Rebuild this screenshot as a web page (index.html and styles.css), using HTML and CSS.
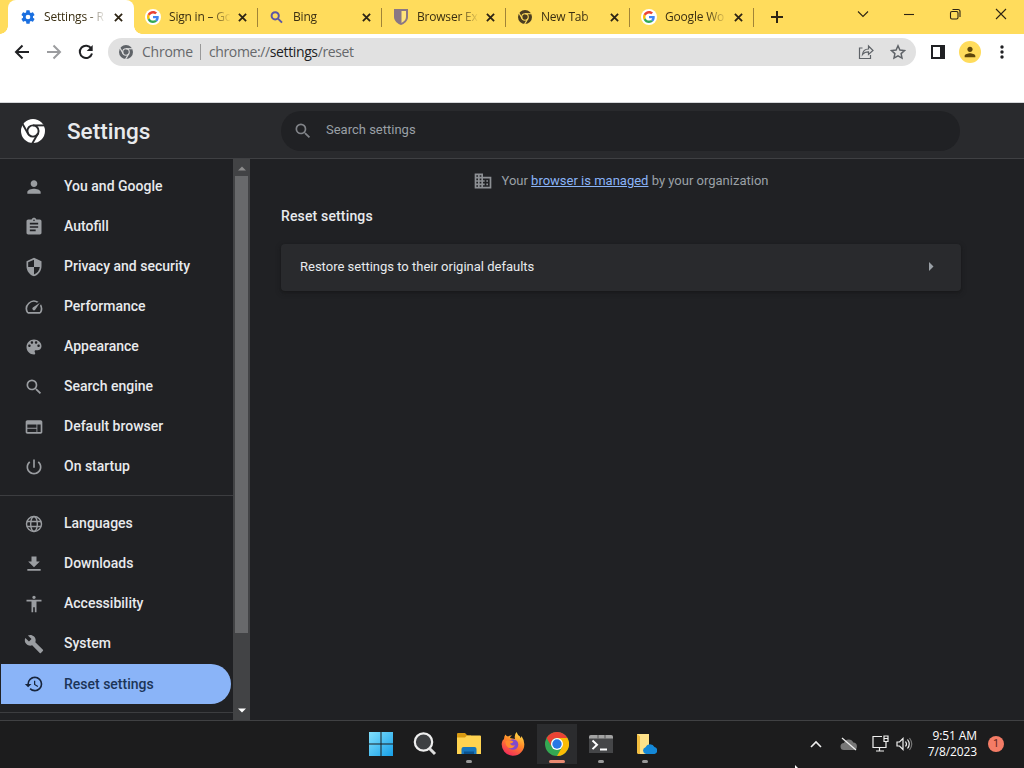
FILE: index.html
```
<!DOCTYPE html>
<html lang="en">
<head>
<meta charset="utf-8">
<title>Settings - Reset settings</title>
<link rel="stylesheet" href="styles.css">
</head>
<body>
<svg class="defs" aria-hidden="true">
  <symbol id="x" viewBox="0 0 10 10"><path d="M1 1l8 8M9 1L1 9" stroke="currentColor" stroke-width="2"/></symbol>
  <symbol id="g" viewBox="0 0 48 48"><path fill="#EA4335" d="M24 9.5c3.54 0 6.71 1.22 9.21 3.6l6.85-6.85C35.9 2.38 30.47 0 24 0 14.62 0 6.51 5.38 2.56 13.22l7.98 6.19C12.43 13.72 17.74 9.5 24 9.5z"/><path fill="#4285F4" d="M46.98 24.55c0-1.57-.15-3.09-.38-4.55H24v9.02h12.94c-.58 2.96-2.26 5.48-4.78 7.18l7.73 6c4.51-4.18 7.09-10.36 7.09-17.65z"/><path fill="#FBBC05" d="M10.53 28.59c-.48-1.45-.76-2.99-.76-4.59s.27-3.14.76-4.59l-7.98-6.19C.92 16.46 0 20.12 0 24s.92 7.54 2.56 10.78l7.97-6.19z"/><path fill="#34A853" d="M24 48c6.48 0 11.93-2.13 15.89-5.81l-7.73-6c-2.15 1.45-4.92 2.3-8.16 2.3-6.26 0-11.57-4.22-13.47-9.91l-7.98 6.19C6.51 42.62 14.62 48 24 48z"/></symbol>
  <symbol id="search" viewBox="0 0 24 24"><path fill="currentColor" d="M15.5 14h-.79l-.28-.27A6.471 6.471 0 0 0 16 9.5 6.5 6.5 0 1 0 9.5 16c1.61 0 3.09-.59 4.23-1.57l.27.28v.79l5 4.99L20.49 19l-4.99-5zm-6 0C7.01 14 5 11.99 5 9.5S7.01 5 9.5 5 14 7.01 14 9.5 11.99 14 9.5 14z"/></symbol>
  <symbol id="chrome" viewBox="0 0 24 24"><circle cx="12" cy="12" r="12" fill="currentColor"/><g fill="none" stroke="var(--gap)" stroke-width="1.9"><circle cx="12" cy="12" r="5.6"/><path d="M12 6.4h11.5"/><path d="M12 6.4h11.5" transform="rotate(120 12 12)"/><path d="M12 6.4h11.5" transform="rotate(240 12 12)"/></g></symbol>
  <symbol id="person" viewBox="0 0 24 24"><path fill="currentColor" d="M12 12c2.21 0 4-1.79 4-4s-1.79-4-4-4-4 1.79-4 4 1.79 4 4 4zm0 2c-2.67 0-8 1.34-8 4v2h16v-2c0-2.66-5.33-4-8-4z"/></symbol>
</svg>

<div class="tabs">
  <div class="tab active"><svg class="fav" viewBox="0 0 24 24"><path fill="#1a6fe0" fill-rule="evenodd" d="M19.43 12.98c.04-.32.07-.64.07-.98s-.03-.66-.07-.98l2.11-1.65c.19-.15.24-.42.12-.64l-2-3.46c-.12-.22-.39-.3-.61-.22l-2.49 1c-.52-.4-1.08-.73-1.69-.98l-.38-2.65A.488.488 0 0 0 14 2h-4c-.25 0-.46.18-.49.42l-.38 2.65c-.61.25-1.17.59-1.69.98l-2.49-1c-.23-.09-.49 0-.61.22l-2 3.46c-.13.22-.07.49.12.64l2.11 1.65c-.04.32-.07.65-.07.98s.03.66.07.98l-2.11 1.65c-.19.15-.24.42-.12.64l2 3.46c.12.22.39.3.61.22l2.49-1c.52.4 1.08.73 1.69.98l.38 2.65c.03.24.24.42.49.42h4c.25 0 .46-.18.49-.42l.38-2.65c.61-.25 1.17-.59 1.69-.98l2.49 1c.23.09.49 0 .61-.22l2-3.46c.12-.22.07-.49-.12-.64l-2.11-1.65zM12 15.5a3.5 3.5 0 1 1 0-7 3.5 3.5 0 0 1 0 7z"/></svg><span class="title">Settings - R</span><svg class="close"><use href="#x"/></svg></div>
  <div class="tab"><span class="fav disc"><svg><use href="#g"/></svg></span><span class="title">Sign in – Go</span><svg class="close"><use href="#x"/></svg></div>
  <div class="tab"><svg class="fav" viewBox="0 0 16 16" fill="none" stroke="#5b55a5" stroke-width="2"><circle cx="6.2" cy="6.8" r="3.6"/><path d="M9 9.6l4 4"/></svg><span class="title">Bing</span><svg class="close"><use href="#x"/></svg></div>
  <div class="tab"><svg class="fav" viewBox="0 0 16 16"><path d="M1 0h14v8c0 4-4 7-7 8C5 15 1 12 1 8z" fill="#8a7784"/><path d="M8.500 2h4.500V8c0 3-2 4.500-4.500 6z" fill="#ffe47a"/></svg><span class="title">Browser Ex</span><svg class="close"><use href="#x"/></svg></div>
  <div class="tab"><svg class="fav brown"><use href="#chrome" x="1" y="1" width="14" height="14"/></svg><span class="title">New Tab</span><svg class="close"><use href="#x"/></svg></div>
  <div class="tab"><span class="fav disc"><svg><use href="#g"/></svg></span><span class="title">Google Wo</span><svg class="close"><use href="#x"/></svg></div>
  <svg class="plus" viewBox="0 0 12 12"><path d="M6 0v12M0 6h12" stroke="#2d2414" stroke-width="2"/></svg>
  <div class="wincontrols">
    <svg viewBox="0 0 12 12"><path d="M1 3.500l5 5 5-5"/></svg>
    <svg viewBox="0 0 12 12"><path d="M1 6.500h10"/></svg>
    <svg viewBox="0 0 12 12"><rect x="1.500" y="3.500" width="7.500" height="7.500" rx="1.500"/><path d="M3.500 1.500H9A2 2 0 0 1 11 3.500V9"/></svg>
    <svg viewBox="0 0 12 12"><path d="M1 1l10 10M11 1L1 11"/></svg>
  </div>
</div>

<div class="toolbar">
  <div class="nav">
    <svg viewBox="0 0 16 16"><path d="M15 8H2M8.500 1.500L2 8l6.500 6.500"/></svg>
    <svg class="off" viewBox="0 0 16 16"><path d="M1 8h13M7.500 1.500L14 8l-6.500 6.500"/></svg>
    <svg viewBox="0 0 16 16"><path d="M13.300 4.600A6.200 6.200 0 1 0 14 9.500"/><path d="M14.700 1v6H8.700z" fill="#202124" stroke="none"/></svg>
  </div>
  <div class="omnibox">
    <svg class="site"><use href="#chrome"/></svg><span class="origin">Chrome</span><span class="bar"></span><span class="url">chrome://<b>settings</b>/reset</span>
    <svg class="share" viewBox="0 0 16 16"><path d="M4.500 4H1.500v10.500h11V11M4.500 10.500C5 6.500 7.500 5 10.500 5V2l4.500 4.500-4.500 4V7.800C8 7.800 6 8.500 4.500 10.500z"/></svg>
    <svg class="star" viewBox="0 0 16 16"><path d="M8 1.800l1.900 4.200 4.600.5-3.400 3.100.9 4.500L8 11.800l-4 2.300.9-4.500L1.500 6.500l4.600-.5z"/></svg>
  </div>
  <svg class="panel" viewBox="0 0 14 14"><path d="M0 0h14v14H0zM2 2v10h7V2z" fill="#202124" fill-rule="evenodd"/></svg>
  <span class="avatar"><svg><use href="#person"/></svg></span>
  <svg class="dots" viewBox="0 0 4 14"><circle cx="2" cy="2" r="1.700"/><circle cx="2" cy="7" r="1.700"/><circle cx="2" cy="12" r="1.700"/></svg>
</div>

<header class="header">
  <svg class="logo"><use href="#chrome"/></svg>
  <h1>Settings</h1>
  <div class="searchbox"><svg><use href="#search"/></svg><span>Search settings</span></div>
</header>

<div class="content">
  <nav class="menu">
    <a class="item"><svg><use href="#person"/></svg>You and Google</a>
    <a class="item"><svg viewBox="0 0 24 24"><path d="M19 3h-4.180C14.400 1.840 13.300 1 12 1c-1.300 0-2.400.84-2.820 2H5c-1.100 0-2 .9-2 2v14c0 1.100.9 2 2 2h14c1.100 0 2-.9 2-2V5c0-1.100-.9-2-2-2zm-7 0c.55 0 1 .45 1 1s-.45 1-1 1-1-.45-1-1 .45-1 1-1zm2 14H7v-2h7v2zm3-4H7v-2h10v2zm0-4H7V7h10v2z"/></svg>Autofill</a>
    <a class="item"><svg viewBox="0 0 24 24"><path d="M12 1L3 5v6c0 5.550 3.840 10.740 9 12 5.160-1.260 9-6.450 9-12V5l-9-4zm0 10.990h7c-.53 4.120-3.280 7.790-7 8.940V12H5V6.300l7-3.110v8.800z"/></svg>Privacy and security</a>
    <a class="item"><svg viewBox="0 0 24 24"><path d="M20.380 8.570l-1.230 1.850a8 8 0 0 1-.22 7.580H5.070A8 8 0 0 1 15.580 6.850l1.850-1.230A10 10 0 0 0 3.350 19a2 2 0 0 0 1.720 1h13.850a2 2 0 0 0 1.740-1 10 10 0 0 0-.27-10.440z"/><path d="M10.590 15.410a2 2 0 0 0 2.830 0l5.660-8.490-8.490 5.660a2 2 0 0 0 0 2.830z"/></svg>Performance</a>
    <a class="item"><svg viewBox="0 0 24 24"><path d="M12 3c-4.970 0-9 4.030-9 9s4.030 9 9 9c.83 0 1.500-.67 1.500-1.500 0-.39-.15-.74-.39-1.010-.23-.26-.38-.61-.38-.99 0-.83.67-1.500 1.500-1.500H16c2.760 0 5-2.240 5-5 0-4.420-4.030-8-9-8zm-5.500 9c-.83 0-1.500-.67-1.500-1.500S5.670 9 6.500 9 8 9.670 8 10.500 7.330 12 6.500 12zm3-4C8.670 8 8 7.330 8 6.500S8.670 5 9.500 5s1.500.67 1.500 1.500S10.330 8 9.500 8zm5 0c-.83 0-1.500-.67-1.500-1.500S13.670 5 14.500 5s1.500.67 1.500 1.500S15.330 8 14.500 8zm3 4c-.83 0-1.500-.67-1.500-1.500S16.670 9 17.500 9s1.500.67 1.500 1.500-.67 1.500-1.500 1.500z"/></svg>Appearance</a>
    <a class="item"><svg><use href="#search"/></svg>Search engine</a>
    <a class="item"><svg viewBox="0 0 24 24"><path d="M20 4H4c-1.100 0-1.990.9-1.990 2L2 18c0 1.100.9 2 2 2h16c1.100 0 2-.9 2-2V6c0-1.100-.9-2-2-2zm-5 14H4v-4h11v4zm0-5H4V9h11v4zm5 5h-4V9h4v9z"/></svg>Default browser</a>
    <a class="item"><svg viewBox="0 0 24 24"><path d="M13 3h-2v10h2V3zm4.830 2.170l-1.420 1.420C17.990 7.860 19 9.810 19 12c0 3.870-3.130 7-7 7s-7-3.130-7-7c0-2.190 1.010-4.140 2.580-5.420L6.170 5.170C4.230 6.820 3 9.260 3 12c0 4.970 4.030 9 9 9s9-4.030 9-9c0-2.740-1.230-5.180-3.170-6.830z"/></svg>On startup</a>
    <div class="rule"></div>
    <a class="item"><svg class="line" viewBox="0 0 24 24"><circle cx="12" cy="12" r="9"/><ellipse cx="12" cy="12" rx="4" ry="9"/><path d="M3.500 9h17M3.500 15h17"/></svg>Languages</a>
    <a class="item"><svg viewBox="0 0 24 24"><path d="M19 9h-4V3H9v6H5l7 7 7-7zM4 18v2h16v-2z"/></svg>Downloads</a>
    <a class="item"><svg viewBox="0 0 24 24"><path d="M12 2c1.100 0 2 .9 2 2s-.9 2-2 2-2-.9-2-2 .9-2 2-2zm9 7h-6v13h-2v-6h-2v6H9V9H3V7h18v2z"/></svg>Accessibility</a>
    <a class="item"><svg viewBox="0 0 24 24"><path d="M22.700 19l-9.100-9.100c.9-2.300.4-5-1.500-6.900-2-2-5-2.400-7.400-1.300L9 6 6 9 1.600 4.700C.4 7.100.9 10.100 2.900 12.100c1.900 1.900 4.600 2.400 6.900 1.500l9.100 9.100c.4.4 1 .4 1.400 0l2.300-2.300c.5-.4.5-1.100.1-1.400z"/></svg>System</a>
    <a class="item selected"><svg viewBox="0 0 24 24"><path d="M13 3a9 9 0 0 0-9 9H1l3.890 3.890.07.14L9 12H6c0-3.870 3.130-7 7-7s7 3.130 7 7-3.130 7-7 7c-1.930 0-3.680-.79-4.940-2.060l-1.420 1.420A8.954 8.954 0 0 0 13 21a9 9 0 0 0 0-18zm-1 5v5l4.280 2.540.72-1.210-3.500-2.080V8H12z"/></svg>Reset settings</a>
    <div class="rule"></div>
  </nav>
  <div class="scrollbar">
    <svg class="up" viewBox="0 0 8 5"><path d="M0 4.500L4 .5l4 4z"/></svg>
    <div class="thumb"></div>
    <svg class="down" viewBox="0 0 8 5"><path d="M0 .5l4 4 4-4z"/></svg>
  </div>
  <main class="main">
    <p class="managed"><svg viewBox="0 0 24 24"><path d="M12 7V3H2v18h20V7H12zM6 19H4v-2h2v2zm0-4H4v-2h2v2zm0-4H4V9h2v2zm0-4H4V5h2v2zm4 12H8v-2h2v2zm0-4H8v-2h2v2zm0-4H8V9h2v2zm0-4H8V5h2v2zm10 12h-8v-2h2v-2h-2v-2h2v-2h-2V9h8v10zm-2-8h-2v2h2v-2zm0 4h-2v2h2v-2z"/></svg><span>Your <a>browser is managed</a> by your organization</span></p>
    <h2>Reset settings</h2>
    <div class="card"><span>Restore settings to their original defaults</span><svg viewBox="0 0 5 9"><path d="M0 0l4.500 4.500L0 9z"/></svg></div>
  </main>
</div>

<footer class="taskbar">
  <div class="apps">
    <div class="app"><svg viewBox="0 0 24 24"><defs><linearGradient id="win" x2="1" y2="1" gradientUnits="objectBoundingBox"><stop stop-color="#82e0fc"/><stop offset="1" stop-color="#169fe8"/></linearGradient></defs><path fill="url(#win)" d="M0 0h11.500v11.500H0zM12.500 0H24v11.500H12.500zM0 12.500h11.500V24H0zM12.500 12.500H24V24H12.500z"/></svg></div>
    <div class="app"><svg viewBox="0 0 24 24"><circle cx="10.500" cy="10" r="8.700" fill="#3d3f42" stroke="#eee" stroke-width="2.200"/><path d="M16.500 16.500l5.500 5.500" stroke="#ddd" stroke-width="3"/></svg></div>
    <div class="app run"><svg viewBox="0 0 24 24"><path d="M0 2q0-1 1-1h7l2.500 2.500H14V10H0z" fill="#d99a12"/><path d="M0 5.500h8l2-2h13q1 0 1 1V22H0z" fill="#ffd350"/><path d="M4.500 22v-5q0-2 2-2h11q2 0 2 2v5z" fill="#1877bd"/><path d="M7 19.500h10V22H7z" fill="#0b528e"/></svg></div>
    <div class="app"><svg viewBox="0 0 24 24"><defs><linearGradient id="fox" x1=".8" y1="0" x2=".3" y2="1"><stop stop-color="#ffe34a"/><stop offset=".45" stop-color="#ff8a28"/><stop offset="1" stop-color="#f3275c"/></linearGradient></defs><path fill="url(#fox)" d="M3 7q0-3 1.500-4.500Q5 4 7 4.500q2-1.500 4-1-2 1-2 2.500l5 1q-1-4 1.500-7 1 3 3.500 4.500 0 1 .5 1.500 1-1 1-2Q23 7.500 23.300 12A11.300 11.300 0 1 1 .8 11Q1 8.500 3 7z"/><circle cx="12" cy="12.500" r="5.300" fill="#8149cc"/><path d="M4.500 9q4-1.500 8 .5-1 2-3.500 2 1 3 5 1.500-2.500 5-7 2.500-3-2-2.500-6.500z" fill="#ff8b2d"/></svg></div>
    <div class="app current"><svg viewBox="0 0 24 24"><circle cx="12" cy="12" r="12" fill="#34a853"/><path d="M12 6h10.400A12 12 0 0 1 12 24l5.200-9z" fill="#fbbc05"/><path d="M1.600 6A12 12 0 0 1 22.400 6H12a6 6 0 0 0-5.200 9z" fill="#ea4335"/><circle cx="12" cy="12" r="6" fill="#fff"/><circle cx="12" cy="12" r="4.700" fill="#2878e4"/></svg></div>
    <div class="app run"><svg viewBox="0 0 24 24"><path d="M0 5q0-2 2-2h20q2 0 2 2v16H0z" fill="#454648"/><path d="M0 5q0-2 2-2h20q2 0 2 2v1.500H0z" fill="#a3a3a3"/><path d="M9 3v3.500M16 3v3.500" stroke="#555"/><path d="M3.500 8.500l4.500 4.300-4.500 4.300M11 17.500h7" fill="none" stroke="#fff" stroke-width="2"/></svg></div>
    <div class="app run"><svg viewBox="0 0 24 24"><path d="M4 2h12v20H6q-2 0-2-2z" fill="#ffe28a"/><path d="M4 2l3 2.500V22q-3 0-3-2z" fill="#f2bd3f"/><path d="M13 22a3.500 3.500 0 0 1-.5-6.800 5 5 0 0 1 9-.2A3.600 3.600 0 0 1 21.500 22z" fill="#1488d8"/></svg></div>
  </div>
  <div class="tray">
    <svg class="chev" viewBox="0 0 12 8"><path d="M1 7l5-5 5 5" stroke-width="1.600"/></svg>
    <svg class="cloud" viewBox="0 0 18 14"><path d="M4 13a3.500 3.500 0 0 1 0-7 5 5 0 0 1 9.300-.5A3.800 3.800 0 0 1 14 13z" fill="#777" stroke="none"/><path d="M2 1l14 12" stroke-width="1.300"/></svg>
    <svg class="net" viewBox="0 0 17 17"><path d="M10 1.500H1v11h13V8M7.500 12.500V16M4 16h8M14 7v4M12 1h4v5.500h-4zM12 3.500h4"/></svg>
    <svg class="vol" viewBox="0 0 17 14"><path d="M1 5v4h2.500L7 12.500v-11L3.500 5zM9.500 4.500q2 2.500 0 5M11.500 2.500q3.500 4.500 0 9"/><path d="M13.500 1q4.500 6 0 12" stroke="#777"/></svg>
  </div>
  <div class="clock">9:51 AM<br>7/8/2023</div>
  <span class="badge">1</span>
  <svg class="cursor" viewBox="0 0 3 3"><path d="M0 0l3 3H0z"/></svg>
</footer>
</body>
</html>
```
FILE: styles.css
```
* { box-sizing: border-box; }
body { margin: 0; width: 1024px; height: 768px; overflow: hidden; display: flex; flex-direction: column; background: #202124; color: #e8eaed; font: 13px/20px Roboto, sans-serif; }
svg { display: block; flex: none; }
.defs { display: none; }
h1, h2, p { margin: 0; }

.tabs { height: 34px; flex: none; display: flex; align-items: center; background: #ffdc5c; padding-left: 8px; position: relative; color: #3b2f12; }
.tab { width: 124px; height: 34px; flex: none; display: flex; align-items: center; padding-left: 11px; position: relative; font: 12px/16px "Open Sans", "Noto Sans", sans-serif; letter-spacing: -.2px; }
.tab::after { content: ""; position: absolute; right: 0; top: 8px; width: 1px; height: 19px; background: #a18437; }
.tab.active { width: 126px; background: #fff; border-radius: 8px 8px 0 0; padding-left: 12px; }
.tab.active::before { content: ""; position: absolute; left: -8px; bottom: 0; width: 8px; height: 8px; background: radial-gradient(circle at 0 0, transparent 7.500px, #fff 8px); }
.tab.active::after { background: radial-gradient(circle at 100% 0, transparent 7.500px, #fff 8px); right: -8px; top: 26px; width: 8px; height: 8px; }
.fav { width: 16px; height: 16px; flex: none; margin-right: 8px; }
.disc { border-radius: 50%; background: #fff; padding: 2px; }
.disc svg { width: 12px; height: 12px; }
.brown { color: #4a3d20; --gap: #ffdc5c; }
.title { width: 61px; overflow: hidden; white-space: nowrap; -webkit-mask-image: linear-gradient(90deg, #000 42px, transparent 62px); mask-image: linear-gradient(90deg, #000 42px, transparent 62px); }
.close { width: 9px; height: 9px; margin-left: 8px; color: #2d2414; }
.active .close { margin-left: 9px; }
.plus { width: 12px; height: 12px; margin-left: 17px; }
.wincontrols { margin: -6px 17px 0 auto; display: flex; gap: 34px; }
.wincontrols svg { width: 12px; height: 12px; fill: none; stroke: #2d2414; stroke-width: 1.100; }

.toolbar { height: 69px; flex: none; background: #fff; border-bottom: 1px solid #d5d7da; display: flex; align-items: flex-start; padding: 4px 20px 0 14px; }
.nav { display: flex; gap: 16px; padding-top: 6px; width: 94px; }
.nav svg { width: 16px; height: 16px; fill: none; stroke: #202124; stroke-width: 2; }
.nav .off { stroke: #9b9c9f; }
.omnibox { width: 808px; height: 28px; border-radius: 14px; background: #e1e1e1; display: flex; align-items: center; padding: 0 10px 0 11px; font: 14px/20px "Open Sans", "Noto Sans", sans-serif; letter-spacing: -.380px; color: #66686b; }
.site { width: 14px; height: 14px; color: #5f6368; --gap: #e1e1e1; }
.origin { margin-left: 9px; width: 49px; letter-spacing: -.250px; }
.bar { width: 1px; height: 16px; background: #999; margin: 0 8px 0 9px; }
.url b { font-weight: 400; color: #202124; }
.share, .star { width: 16px; height: 16px; fill: none; stroke: #5f6368; }
.share { margin-left: auto; margin-right: 16px; stroke-width: 1.200; }
.star { stroke-width: 1.500; }
.panel { width: 14px; height: 14px; margin: 7px 0 0 15px; }
.avatar { width: 22px; height: 22px; border-radius: 50%; background: #ffdc5c; margin: 3px 0 0 14px; padding: 3px; color: #5e460b; }
.avatar svg { width: 16px; height: 16px; }
.dots { width: 4px; height: 14px; margin: 7px 0 0 19px; fill: #202124; }

.header { height: 56px; flex: none; background: #292a2d; border-bottom: 1px solid #3f4043; display: flex; align-items: center; padding-left: 21px; }
.logo { width: 24px; height: 24px; color: #fff; --gap: #292a2d; }
h1 { width: 214px; margin-left: 22px; font-size: 22.500px; line-height: 28px; font-weight: 500; }
.searchbox { width: 679px; height: 40px; border-radius: 20px; background: #202124; display: flex; align-items: center; padding-left: 12px; color: #9aa0a6; }
.searchbox svg { width: 20px; height: 20px; margin-right: 13px; color: #808388; }
.searchbox span { margin-top: -2px; }

.content { flex: 1; min-height: 0; display: flex; }
.menu { width: 233px; padding-top: 7px; overflow: hidden; }
.item { height: 40px; margin: 0 2px 0 1px; padding-left: 23px; display: flex; align-items: center; font-size: 14px; font-weight: 500; }
.item svg { width: 20px; height: 20px; margin-right: 20px; fill: #9a9da1; color: #9a9da1; position: relative; top: 1px; }
.item svg path { fill-rule: evenodd; }
.item .line { fill: none; stroke: #9a9da1; stroke-width: 1.700; }
.rule { height: 1px; background: #3c3d40; margin: 9px 0 7px; }
.selected { background: #8ab4f8; border-radius: 0 20px 20px 0; color: #1c3558; margin-top: 1px; padding-bottom: 1px; }
.selected svg { fill: #17243b; top: 0; }
.selected + .rule { margin-top: 8px; }
.scrollbar { width: 17px; background: #424345; display: flex; flex-direction: column; align-items: center; }
.scrollbar svg { width: 8px; height: 5px; }
.up { margin: 7px 0 5px; fill: #8b8b8b; }
.thumb { width: 13px; height: 457px; background: #68696b; }
.down { margin: auto 0 7px; fill: #fff; }
.main { flex: 1; padding: 12px 63px 0 31px; }
.managed { display: flex; justify-content: center; align-items: center; height: 20px; color: #9aa0a6; }
.managed svg { width: 20px; height: 20px; fill: #8d9094; margin: 0 9px 0 -1px; }
.managed a { color: #8ab4f8; text-decoration: underline; }
h2 { margin-top: 15px; font-size: 14px; line-height: 20px; font-weight: 500; letter-spacing: .150px; }
.card { margin-top: 18px; height: 47px; border-radius: 4px; background: #292a2d; box-shadow: 0 1px 2px #1115, 0 2px 5px 1px #1114; display: flex; align-items: center; justify-content: space-between; padding: 0 27px 2px 19px; }
.card svg { width: 5px; height: 9px; fill: #9aa0a6; }

.taskbar { height: 48px; flex: none; position: relative; background: #1c1c1d; border-top: 1px solid #404143; display: flex; align-items: center; padding: 0 0 2px 359px; }
.apps { display: flex; }
.app { width: 44px; height: 45px; display: flex; align-items: center; justify-content: center; position: relative; }
.app svg { width: 24px; height: 24px; }
.app.current { background: linear-gradient(#2b2c2e, #2b2c2e) center / 40px 40px no-repeat; }
.run::after, .current::after { content: ""; position: absolute; bottom: 3px; width: 6px; height: 3px; border-radius: 2px; background: #999; }
.current::after { width: 16px; background: #e98a72; }
.tray { margin-left: 143px; display: flex; align-items: center; }
.tray svg { fill: none; stroke: #eee; stroke-width: 1.200; }
.chev { width: 12px; height: 8px; margin-right: 18px; }
.cloud { width: 18px; height: 14px; margin-right: 14px; }
.net { width: 17px; height: 17px; margin-right: 7px; }
.vol { width: 17px; height: 14px; }
.clock { width: 64px; text-align: right; font: 12px/16px "Open Sans", "Noto Sans", sans-serif; letter-spacing: -.1px; color: #fff; }
.badge { width: 16px; height: 16px; margin-left: 11px; border-radius: 50%; background: #f47c66; color: #5a1d15; font-size: 10px; line-height: 16px; text-align: center; }
.cursor { position: absolute; left: 795px; bottom: 0; width: 3px; height: 3px; fill: #fff; }
```
